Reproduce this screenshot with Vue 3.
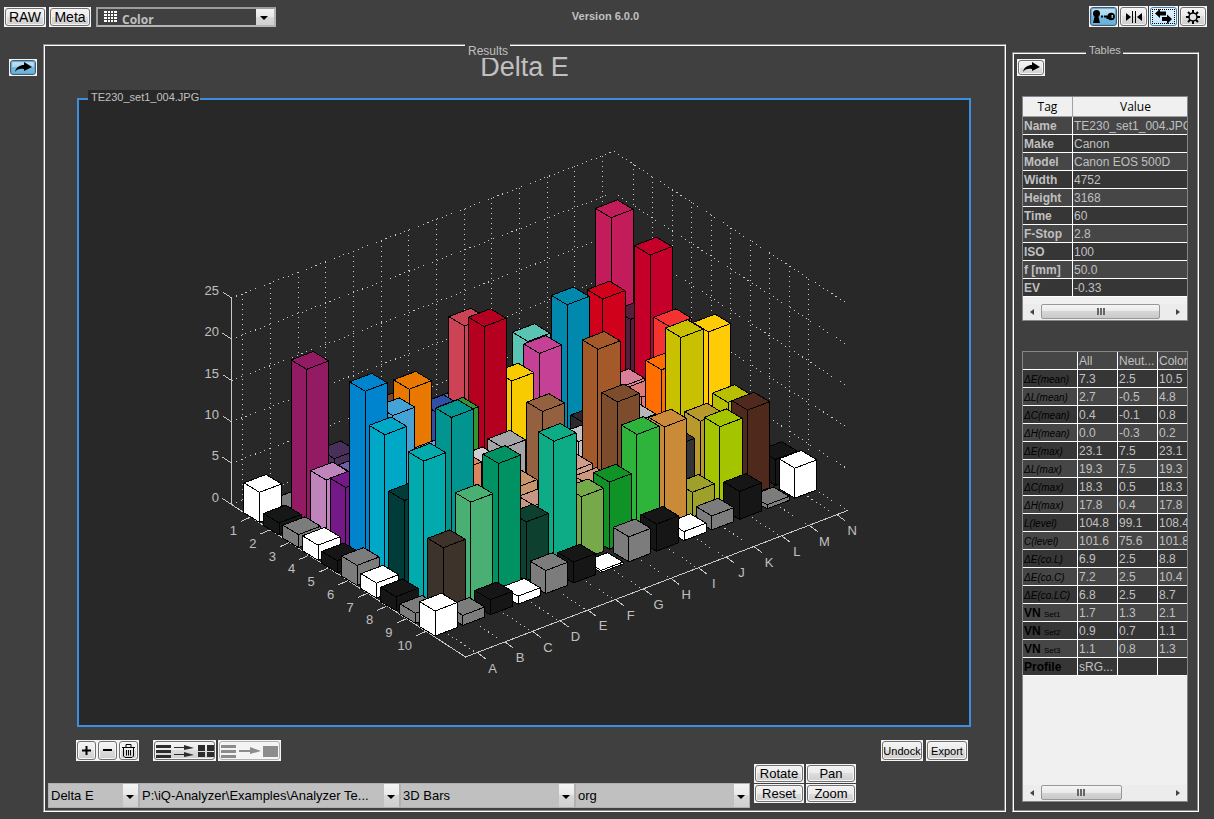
<script setup>
const letters = 'ABCDEFGHIJKLMN'.split('')
const COL = { x: 27.67, y: -10.6 }
const ROW = { x: 19.5, y: 12.63 }
const Z = 8.264

// column, row, bar height, fill
const rawBars = [
  ['A', 1, 30, '#ffffff'], ['A', 2, 12, '#161818'], ['A', 3, 13, '#7c7c7c'], ['A', 4, 15, '#ffffff'],
  ['A', 5, 12, '#161616'], ['A', 6, 20, '#7c7c7c'], ['A', 7, 15, '#ffffff'], ['A', 8, 14, '#161616'],
  ['A', 9, 10, '#7c7c7c'], ['A', 10, 25, '#ffffff'],
  ['B', 1, 3, '#7c7c7c'], ['B', 2, 155, '#921b63'], ['B', 3, 57, '#be84bb'], ['B', 4, 62, '#761988'],
  ['B', 5, 171, '#0084ce'], ['B', 6, 140, '#00a8c8'], ['B', 7, 87, '#023c38'], ['B', 8, 139, '#00aaad'],
  ['B', 9, 65, '#3d332a'], ['B', 10, 10, '#7c7c7c'],
  ['C', 2, 55, '#49305a'], ['C', 3, 52, '#6c5fa8'], ['C', 5, 136, '#44a2d4'], ['C', 8, 172, '#02948f'],
  ['C', 9, 100, '#4aaf72'], ['C', 10, 15, '#161616'],
  ['D', 7, 96, '#dc845d'], ['D', 9, 128, '#019263'], ['D', 10, 8, '#ffffff'],
  ['E', 2, 83, '#7b4530'], ['E', 3, 116, '#e97800'], ['E', 4, 60, '#6ba0da'], ['E', 9, 59, '#0d402f'],
  ['E', 10, 23, '#7c7c7c'],
  ['F', 3, 82, '#2f50a8'], ['F', 4, 92, '#329634'], ['F', 5, 55, '#cfcdcf'], ['F', 7, 57, '#c8956b'],
  ['F', 8, 52, '#c99686'], ['F', 9, 129, '#0eac86'], ['F', 10, 21, '#161616'],
  ['G', 2, 62, '#5078a0'], ['G', 3, 158, '#cc4356'], ['G', 4, 170, '#b60020'], ['G', 5, 61, '#a5a5a7'],
  ['G', 7, 123, '#936140'], ['G', 8, 52, '#cf967e'], ['G', 9, 63, '#76a949'], ['G', 10, 2, '#ffffff'],
  ['H', 4, 105, '#f8cb00'], ['H', 7, 52, '#d19e8c'], ['H', 8, 51, '#cf967e'], ['H', 9, 67, '#0f9326'],
  ['H', 10, 25, '#7c7c7c'],
  ['I', 4, 122, '#c54196'], ['I', 6, 59, '#c4c1c7'], ['I', 7, 164, '#a4592a'], ['I', 8, 124, '#7c4c2d'],
  ['I', 9, 104, '#2fb43b'], ['I', 10, 27, '#161616'],
  ['J', 2, 98, '#5ac3b2'], ['J', 4, 160, '#0088ad'], ['J', 5, 53, '#2a292d'], ['J', 9, 101, '#c98b37'],
  ['J', 10, 9, '#ffffff'],
  ['K', 6, 57, '#b8b8ba'], ['K', 8, 58, '#343434'], ['K', 9, 25, '#9f9f2b'], ['K', 10, 14, '#7c7c7c'],
  ['L', 3, 132, '#d0021b'], ['L', 4, 57, '#d8809a'], ['L', 5, 59, '#e07b7c'], ['L', 6, 99, '#ff6e00'],
  ['L', 7, 144, '#c8c000'], ['L', 8, 73, '#b79a2b'], ['L', 9, 80, '#a4c400'], ['L', 10, 28, '#161616'],
  ['M', 2, 190, '#c21c5a'], ['M', 3, 101, '#551e3c'], ['M', 4, 178, '#c4002a'], ['M', 5, 119, '#f53232'],
  ['M', 7, 139, '#ffcb05'], ['M', 8, 81, '#b8be00'], ['M', 9, 86, '#50291d'], ['M', 10, 4, '#7c7c7c'],
  ['N', 9, 26, '#161616'], ['N', 10, 30, '#ffffff'],
]

const pts = (...p) => p.map(([x, y]) => `${x.toFixed(1)},${y.toFixed(1)}`).join(' ')

// far columns first, and back to front inside a column
const bars = rawBars
  .map(([l, r, h, fill]) => ({ c: letters.indexOf(l), r, h, fill }))
  .sort((a, b) => b.c - a.c || a.r - b.r)
  .map(({ c, r, h, fill }) => {
    const x = 259.5 + COL.x * c + ROW.x * (r - 1)
    const y = 522.3 + COL.y * c + ROW.y * (r - 1)
    const F = [x, y - h]
    const L = [x - 15.6, y - h - 9.4]
    const R = [x + 22.1, y - h - 8.4]
    const B = [x + 6.5, y - h - 17.8]
    return {
      id: letters[c] + r,
      fill,
      left: pts(L, F, [x, y], [L[0], L[1] + h]),
      right: pts(F, R, [R[0], R[1] + h], [x, y]),
      top: pts(L, B, R, F),
    }
  })

const O = [231.5, 504.5]
const backX = 613.7
const backY = 358
const grid = []
for (let v = 0; v <= 5; v++) {
  const d = v * 5 * Z
  grid.push([O[0], O[1] - d, backX, backY - d], [backX, backY - d, 847.7, 510.5 - d])
}
letters.forEach((_, i) => {
  const x = O[0] + 11.3 + COL.x * i
  const y = O[1] - 4.4 + COL.y * i
  grid.push([x, y - 25 * Z, x, y], [x, y, x + 234, y + 153])
})
for (let r = 1; r <= 10; r++) {
  const x = backX + ROW.x * r
  const y = backY + 12.72 * r
  grid.push([x, y - 25 * Z, x, y], [x, y, x - 382.4, y + 146.7])
}

const zTicks = [0, 5, 10, 15, 20, 25].map((v) => ({ v, y: O[1] - v * Z }))
const rowTicks = Array.from({ length: 10 }, (_, i) => ({ v: i + 1, x: 250 + 19.45 * i, y: 517.3 + 12.72 * i }))
const colTicks = letters.map((v, i) => ({ v, x: 477.5 + COL.x * i, y: 652.7 + COL.y * i }))

const tags = [
  ['Name', 'TE230_set1_004.JPG'], ['Make', 'Canon'], ['Model', 'Canon EOS 500D'], ['Width', '4752'],
  ['Height', '3168'], ['Time', '60'], ['F-Stop', '2.8'], ['ISO', '100'], ['f [mm]', '50.0'], ['EV', '-0.33'],
]
const stats = [
  ['ΔE(mean)', '7.3', '2.5', '10.5'], ['ΔL(mean)', '2.7', '-0.5', '4.8'], ['ΔC(mean)', '0.4', '-0.1', '0.8'],
  ['ΔH(mean)', '0.0', '-0.3', '0.2'], ['ΔE(max)', '23.1', '7.5', '23.1'], ['ΔL(max)', '19.3', '7.5', '19.3'],
  ['ΔC(max)', '18.3', '0.5', '18.3'], ['ΔH(max)', '17.8', '0.4', '17.8'], ['L(level)', '104.8', '99.1', '108.4'],
  ['C(level)', '101.6', '75.6', '101.8'], ['ΔE(co.L)', '6.9', '2.5', '8.8'], ['ΔE(co.C)', '7.2', '2.5', '10.4'],
  ['ΔE(co.LC)', '6.8', '2.5', '8.7'],
]
const noise = [['Set1', '1.7', '1.3', '2.1'], ['Set2', '0.9', '0.7', '1.1'], ['Set3', '1.1', '0.8', '1.3']]
const combos = [
  { label: 'Result', value: 'Delta E' },
  { label: 'File', value: 'P:\\iQ-Analyzer\\Examples\\Analyzer Te...' },
  { label: 'Plot type', value: '3D Bars' },
  { label: 'Mode', value: 'org' },
]
</script>

<template>
  <div class="app">
    <header class="topbar">
      <div class="group left">
        <button class="btn text">RAW</button>
        <button class="btn text">Meta</button>
        <div class="module">
          <svg class="module-icon" width="13" height="11" viewBox="0 0 13 11" shape-rendering="crispEdges">
            <rect width="13" height="11" fill="#fff" />
            <path d="M3.5 0V11M6.5 0V11M9.5 0V11M0 2.5H13M0 5.5H13M0 8.5H13" stroke="#404040" />
          </svg>
          <select aria-label="Module"><option>Color</option></select>
        </div>
      </div>
      <h1 class="version">Version 6.0.0</h1>
      <div class="group right">
        <button class="btn icon blue" aria-label="Key">
          <svg width="23" height="13" viewBox="0 0 23 13">
            <circle cx="4.500" cy="3.500" r="3.500" /><path d="M3 5H6L8 13H1Z" />
            <path d="M9 5.500H11V7.500H9ZM12 5.500H17V7.500H16V9H14.500V7.500H12Z" />
            <path fill-rule="evenodd" d="M15.500 6.500a3.700 3.700 0 1 1 7.400 0a3.700 3.700 0 1 1-7.400 0M19.500 5H21V8H19.500Z" />
          </svg>
        </button>
        <button class="btn icon" aria-label="Split">
          <svg width="18" height="12" viewBox="0 0 18 12">
            <path d="M1 2L6 6L1 10ZM17 2L12 6L17 10ZM7 0H8V12H7ZM10 0H11V12H10Z" />
          </svg>
        </button>
        <button class="btn icon pale" aria-label="Swap">
          <svg width="19" height="15" viewBox="0 0 19 15">
            <path d="M1 4.500L6 0V2.500H12V6.500H6V9ZM18 10L13 5.500V8H8V12H13V15Z" />
          </svg>
        </button>
        <button class="btn icon last" aria-label="Settings">
          <svg width="14" height="14" viewBox="0 0 14 14">
            <path d="M7 0V14M0 7H14M2 2L12 12M12 2L2 12" stroke="#000" stroke-width="2" />
            <circle cx="7" cy="7" r="4" fill="#e4e4e4" stroke="#000" stroke-width="1.500" />
          </svg>
        </button>
      </div>
    </header>

    <main class="body">
      <aside class="gutter">
        <button class="btn arrow blue" aria-label="Expand results">
          <svg width="17" height="11" viewBox="0 0 17 11"><path d="M0 10C1 5 5 3 9 3V0L17 5L9 9V7C5 6.500 2 7 0 10Z" /></svg>
        </button>
      </aside>

      <section class="frame results">
        <span class="legend">Results</span>
        <h2 class="title">Delta E</h2>

        <div class="plot">
          <span class="file">TE230_set1_004.JPG</span>
          <svg class="chart" viewBox="79 100 890 625" role="img" aria-label="Delta E 3D bars">
            <g class="grid"><line v-for="(g, i) in grid" :key="i" :x1="g[0]" :y1="g[1]" :x2="g[2]" :y2="g[3]" /></g>
            <g class="axis">
              <path d="M231.500 297.700V504.500L465.500 657L847.700 510.500" />
              <line v-for="t in zTicks" :key="'z' + t.v" x1="231.5" :y1="t.y" x2="222.5" :y2="t.y - 6" />
              <line v-for="t in rowTicks" :key="'r' + t.v" :x1="t.x" :y1="t.y" :x2="t.x - 9" :y2="t.y + 4" />
              <line v-for="t in colTicks" :key="'c' + t.v" :x1="t.x" :y1="t.y" :x2="t.x + 8" :y2="t.y + 6" />
            </g>
            <g class="bars">
              <g v-for="b in bars" :key="b.id" :fill="b.fill">
                <polygon :points="b.left" /><polygon :points="b.right" /><polygon :points="b.top" />
              </g>
            </g>
            <g class="labels">
              <text v-for="t in zTicks" :key="'z' + t.v" x="219" :y="t.y - 3" text-anchor="end">{{ t.v }}</text>
              <text v-for="t in rowTicks" :key="'r' + t.v" :x="t.x - 13" :y="t.y + 18" text-anchor="end">{{ t.v }}</text>
              <text v-for="t in colTicks" :key="'c' + t.v" :x="t.x + 15" :y="t.y + 20" text-anchor="middle">{{ t.v }}</text>
            </g>
          </svg>
        </div>

        <div class="tools">
          <button class="btn sq" aria-label="Add"><svg width="9" height="9" viewBox="0 0 9 9"><path d="M3.500 0H5.500V3.500H9V5.500H5.500V9H3.500V5.500H0V3.500H3.500Z" /></svg></button>
          <button class="btn sq" aria-label="Remove"><svg width="9" height="9" viewBox="0 0 9 9"><path d="M0 3H9V5H0Z" /></svg></button>
          <button class="btn sq" aria-label="Delete">
            <svg width="13" height="14" viewBox="0 0 13 14" fill="none" stroke="#000">
              <path d="M0 3.500H13M4 3V.500H9V3M1.500 4V12L3 13.500H10L11.500 12V4M4.500 6V11.500M6.500 6V11.500M8.500 6V11.500" />
            </svg>
          </button>
          <button class="btn wide" aria-label="Send list to grid">
            <svg width="58" height="14" viewBox="0 0 58 14" fill="#2c2c2c">
              <path d="M0 1H15V4H0ZM0 6H15V9H0ZM0 11H15V14H0ZM18 3H28V1L38 4L28 6V4H18ZM18 10H28V8L38 11L28 13V11H18ZM42 1H49V7H42ZM51 1H58V7H51ZM42 8H49V13H42ZM51 8H58V13H51Z" />
            </svg>
          </button>
          <button class="btn wide off" disabled aria-label="Send list to single view">
            <svg width="58" height="14" viewBox="0 0 58 14" fill="#8c8c8c">
              <path d="M0 1H15V4H0ZM0 6H15V9H0ZM0 11H15V14H0ZM18 6H29V3L40 7L29 10V8H18ZM42 2H57V13H42Z" />
            </svg>
          </button>
          <span class="fill"></span>
          <button class="btn small">Undock</button>
          <button class="btn small">Export</button>
        </div>

        <div class="controls">
          <div class="combos">
            <div v-for="c in combos" :key="c.label" class="combo">
              <select :aria-label="c.label"><option>{{ c.value }}</option></select>
            </div>
          </div>
          <div class="actions">
            <button class="btn">Rotate</button><button class="btn">Pan</button>
            <button class="btn">Reset</button><button class="btn">Zoom</button>
          </div>
        </div>
      </section>

      <section class="frame tables">
        <span class="legend">Tables</span>
        <button class="btn arrow" aria-label="Expand tables">
          <svg width="17" height="11" viewBox="0 0 17 11"><path d="M0 10C1 5 5 3 9 3V0L17 5L9 9V7C5 6.500 2 7 0 10Z" /></svg>
        </button>
        <div class="sheet meta">
          <table>
            <colgroup><col class="c-tag" /><col /></colgroup>
            <thead><tr><th>Tag</th><th>Value</th></tr></thead>
            <tbody>
              <tr v-for="t in tags" :key="t[0]"><th scope="row">{{ t[0] }}</th><td>{{ t[1] }}</td></tr>
            </tbody>
          </table>
          <div class="scroll">
            <button class="sb prev" aria-label="Scroll left"></button>
            <div class="track"><div class="thumb t1"></div></div>
            <button class="sb next" aria-label="Scroll right"></button>
          </div>
        </div>
        <div class="sheet stats">
          <table>
            <colgroup><col class="c-stat" /><col class="c-num" /><col class="c-num" /><col class="c-num" /></colgroup>
            <tbody>
              <tr><td></td><td>All</td><td>Neut...</td><td>Color</td></tr>
              <tr v-for="s in stats" :key="s[0]">
                <th scope="row" class="metric">{{ s[0] }}</th><td>{{ s[1] }}</td><td>{{ s[2] }}</td><td>{{ s[3] }}</td>
              </tr>
              <tr v-for="n in noise" :key="n[0]">
                <th scope="row" class="dark">VN <small>{{ n[0] }}</small></th><td>{{ n[1] }}</td><td>{{ n[2] }}</td><td>{{ n[3] }}</td>
              </tr>
              <tr><th scope="row" class="dark">Profile</th><td>sRG...</td><td></td><td></td></tr>
            </tbody>
          </table>
          <div class="scroll">
            <button class="sb prev" aria-label="Scroll left"></button>
            <div class="track"><div class="thumb t2"></div></div>
            <button class="sb next" aria-label="Scroll right"></button>
          </div>
        </div>
      </section>
    </main>
  </div>
</template>

<style>
body { margin: 0; background: #404040; }
</style>

<style scoped>
* { box-sizing: border-box; }
.app {
  min-height: 100vh;
  display: flex;
  flex-direction: column;
  background: #404040;
  color: #c0c0c0;
  font: 12px "Liberation Sans", Arial, sans-serif;
}
button, select { font-family: inherit; font-size: 13px; margin: 0; padding: 0; border: 0; border-radius: 0; color: #000; }

.btn {
  position: relative;
  isolation: isolate;
  display: flex;
  align-items: center;
  justify-content: center;
  background: #f4f4f4;
  white-space: nowrap;
}
.btn::before {
  content: "";
  position: absolute;
  inset: 1px;
  z-index: -1;
  border: 1px solid #707070;
  border-radius: 3px;
  background: linear-gradient(#f3f3f3, #ebebeb 50%, #dddddd 50%, #cfcfcf);
  box-shadow: inset 0 0 0 1px #f6f6f6;
}
.btn.blue::before { border-color: #2c628b; background: linear-gradient(#c6e4f5, #a5d4ee 45%, #74b8e0 50%, #68b3db); box-shadow: inset 0 0 1px 1px #7d9fb5; }
.btn.pale::before { border-color: #3c7fb1; background: linear-gradient(#e5f4fc, #bee6fd); box-shadow: inset 0 0 0 1px #e8f6fd; }
.btn.pale::after { content: ""; position: absolute; inset: 3px; border: 1px dotted #000; }
.btn.off::before { border-color: #adb2b5; background: #f4f4f4; }

.topbar { display: grid; grid-template-columns: 1fr auto 1fr; align-items: start; height: 44px; padding: 6px 7px 0 4px; flex: none; }
.group { display: flex; }
.left { gap: 3px; padding-top: 1px; }
.right { gap: 1px; justify-content: flex-end; }
.text { width: 42px; height: 20px; font-size: 14px; }
.icon { width: 29px; height: 21px; }
.icon.last { width: 28px; }
.version { margin: 4px 0 0; font-size: 11px; line-height: 13px; font-weight: bold; }
.module { position: relative; display: flex; align-items: center; width: 180px; height: 20px; margin-left: 2px; border: 2px solid #a8a8a8; border-color: #9c9c9c #b4b4b4 #b4b4b4 #9c9c9c; background: #404040; }
.module select { width: 100%; height: 100%; padding: 2px 0 0 24px; appearance: none; background: #404040; color: #c0c0c0; font: bold 12px "Open Sans", sans-serif; }
.module-icon { position: absolute; left: 6px; top: 2px; }
.module::after, .combo::after {
  content: "";
  position: absolute;
  top: 0;
  right: 0;
  bottom: 0;
  width: 18px;
  background: linear-gradient(#f4f4f4, #e8e8e8 50%, #d8d8d8 50%, #d0d0d0);
  pointer-events: none;
}
.module::before, .combo::before {
  content: "";
  position: absolute;
  z-index: 1;
  right: 6px;
  top: 50%;
  margin-top: -1px;
  border: 4px solid transparent;
  border-top-color: #000;
  border-bottom: 0;
  pointer-events: none;
}

.body { flex: 1; display: flex; align-items: stretch; padding: 0 15px 7px 0; }
.gutter { width: 43px; flex: none; padding: 15px 0 0 9px; }
.arrow { width: 28px; height: 17px; }

.frame {
  position: relative;
  display: flex;
  flex-direction: column;
  border: 1px solid;
  border-color: #888 #fff #fff #888;
  box-shadow: inset 1px 1px #fff, inset -1px -1px #888;
}
.legend { position: absolute; z-index: 2; background: #404040; line-height: 14px; }
.results { flex: 1; min-width: 0; }
.results > .legend { top: -1px; left: 421px; padding: 0 2px 0 3px; }
.title { margin: 0; height: 53px; font-size: 27px; font-weight: normal; line-height: 45px; text-align: center; }
.plot { position: relative; flex: 1; margin: 0 34px 0 33px; border: 2px solid #3e8ee0; background: #282828; min-height: 0; }
.chart { display: block; width: 100%; height: 100%; }
.file { position: absolute; left: 9px; top: -10px; padding: 0 1px 0 3px; background: #282828; font-size: 11px; line-height: 14px; }

.grid { stroke: #c8c8c8; stroke-dasharray: 1 4; shape-rendering: crispEdges; }
.axis { stroke: #c8c8c8; fill: none; shape-rendering: crispEdges; }
.bars { stroke: #000; stroke-linejoin: round; shape-rendering: crispEdges; }
.labels { fill: #c0c0c0; font-size: 13px; }

.tools { display: flex; align-items: center; margin: 13px 37px 3px 32px; height: 21px; }
.sq { width: 21px; height: 21px; }
.wide { width: 63px; height: 21px; margin-left: 2px; }
.sq + .wide { margin-left: 14px; }
.fill { flex: 1; }
.small { width: 42px; height: 21px; margin-left: 3px; font-size: 11px; }

.controls { display: flex; align-items: flex-start; margin: 0 149px 3px 4px; gap: 4px; }
.combos { flex: 1; min-width: 0; margin-top: 19px; display: grid; grid-template-columns: 91fr 261fr 175fr 175fr; }
.combo { position: relative; min-width: 0; height: 25px; border: 1px solid #b0b0b4; background: #c0c0c0; }
.combo::after { width: 15px; }
.combo::before { right: 4px; }
.combo select { width: 100%; height: 100%; padding-left: 2px; appearance: none; background: #c0c0c0; }
.actions { display: grid; grid-template-columns: 50px 50px; gap: 1px 2px; }
.actions .btn { height: 19px; }

.tables { flex: none; width: 187px; margin: 8px 0 0 6px; padding: 6px 10px 9px 9px; }
.tables > .legend { top: -10px; left: 73px; padding: 0 2px 0 3px; font-size: 11px; }
.tables > .arrow { flex: none; margin-left: -5px; }
.sheet { display: flex; flex-direction: column; overflow: hidden; border: 1px solid #84868e; background: #f0f0f0; }
.meta { margin-top: 20px; height: 225px; flex: none; }
.stats { margin-top: 30px; flex: 1; }
table { width: 176px; table-layout: fixed; border-collapse: separate; border-spacing: 0; flex: none; }
.stats table { width: 175px; }
.c-tag { width: 50px; }
.c-stat { width: 55px; }
.c-num { width: 40px; }
tr { height: 18px; background: #363636; }
tbody tr:nth-child(odd) { background: #464646; }
td, tbody th {
  height: 18px;
  padding: 2px 1px 0;
  border-right: 1px solid #fff;
  border-bottom: 1px solid #fff;
  font-size: 12px;
  line-height: 15px;
  text-align: left;
  white-space: nowrap;
  overflow: hidden;
}
thead tr { background: #f0f0f0; }
thead th { height: 20px; padding: 0; border-right: 1px solid #a0a0a0; border-bottom: 1px solid #a0a0a0; color: #000; font: 12px/19px "Open Sans", sans-serif; text-align: center; }
tbody .metric { color: #000; font-size: 10px; font-style: italic; font-weight: normal; }
tbody .dark { color: #000; }
small { font-size: 8px; line-height: 8px; font-weight: normal; }

.scroll { display: flex; margin-top: auto; height: 16px; flex: none; background: #ececec; }
.sb { width: 18px; display: flex; align-items: center; justify-content: center; background: none; }
.sb::after { content: ""; border: 3px solid transparent; }
.prev::after { border-right: 4px solid #444; border-left: 0; }
.next::after { border-left: 4px solid #444; border-right: 0; }
.track { flex: 1; }
.thumb { height: 15px; border: 1px solid #989898; border-radius: 2px; background: linear-gradient(#f5f5f5, #e9e9e9 50%, #d6d6d6 50%, #c9c9c9); display: flex; align-items: center; justify-content: center; }
.thumb::after { content: ""; width: 8px; height: 7px; background: repeating-linear-gradient(90deg, #666 0 2px, transparent 2px 3px); }
.t1 { width: 93%; }
.t2 { width: 63%; }
</style>
